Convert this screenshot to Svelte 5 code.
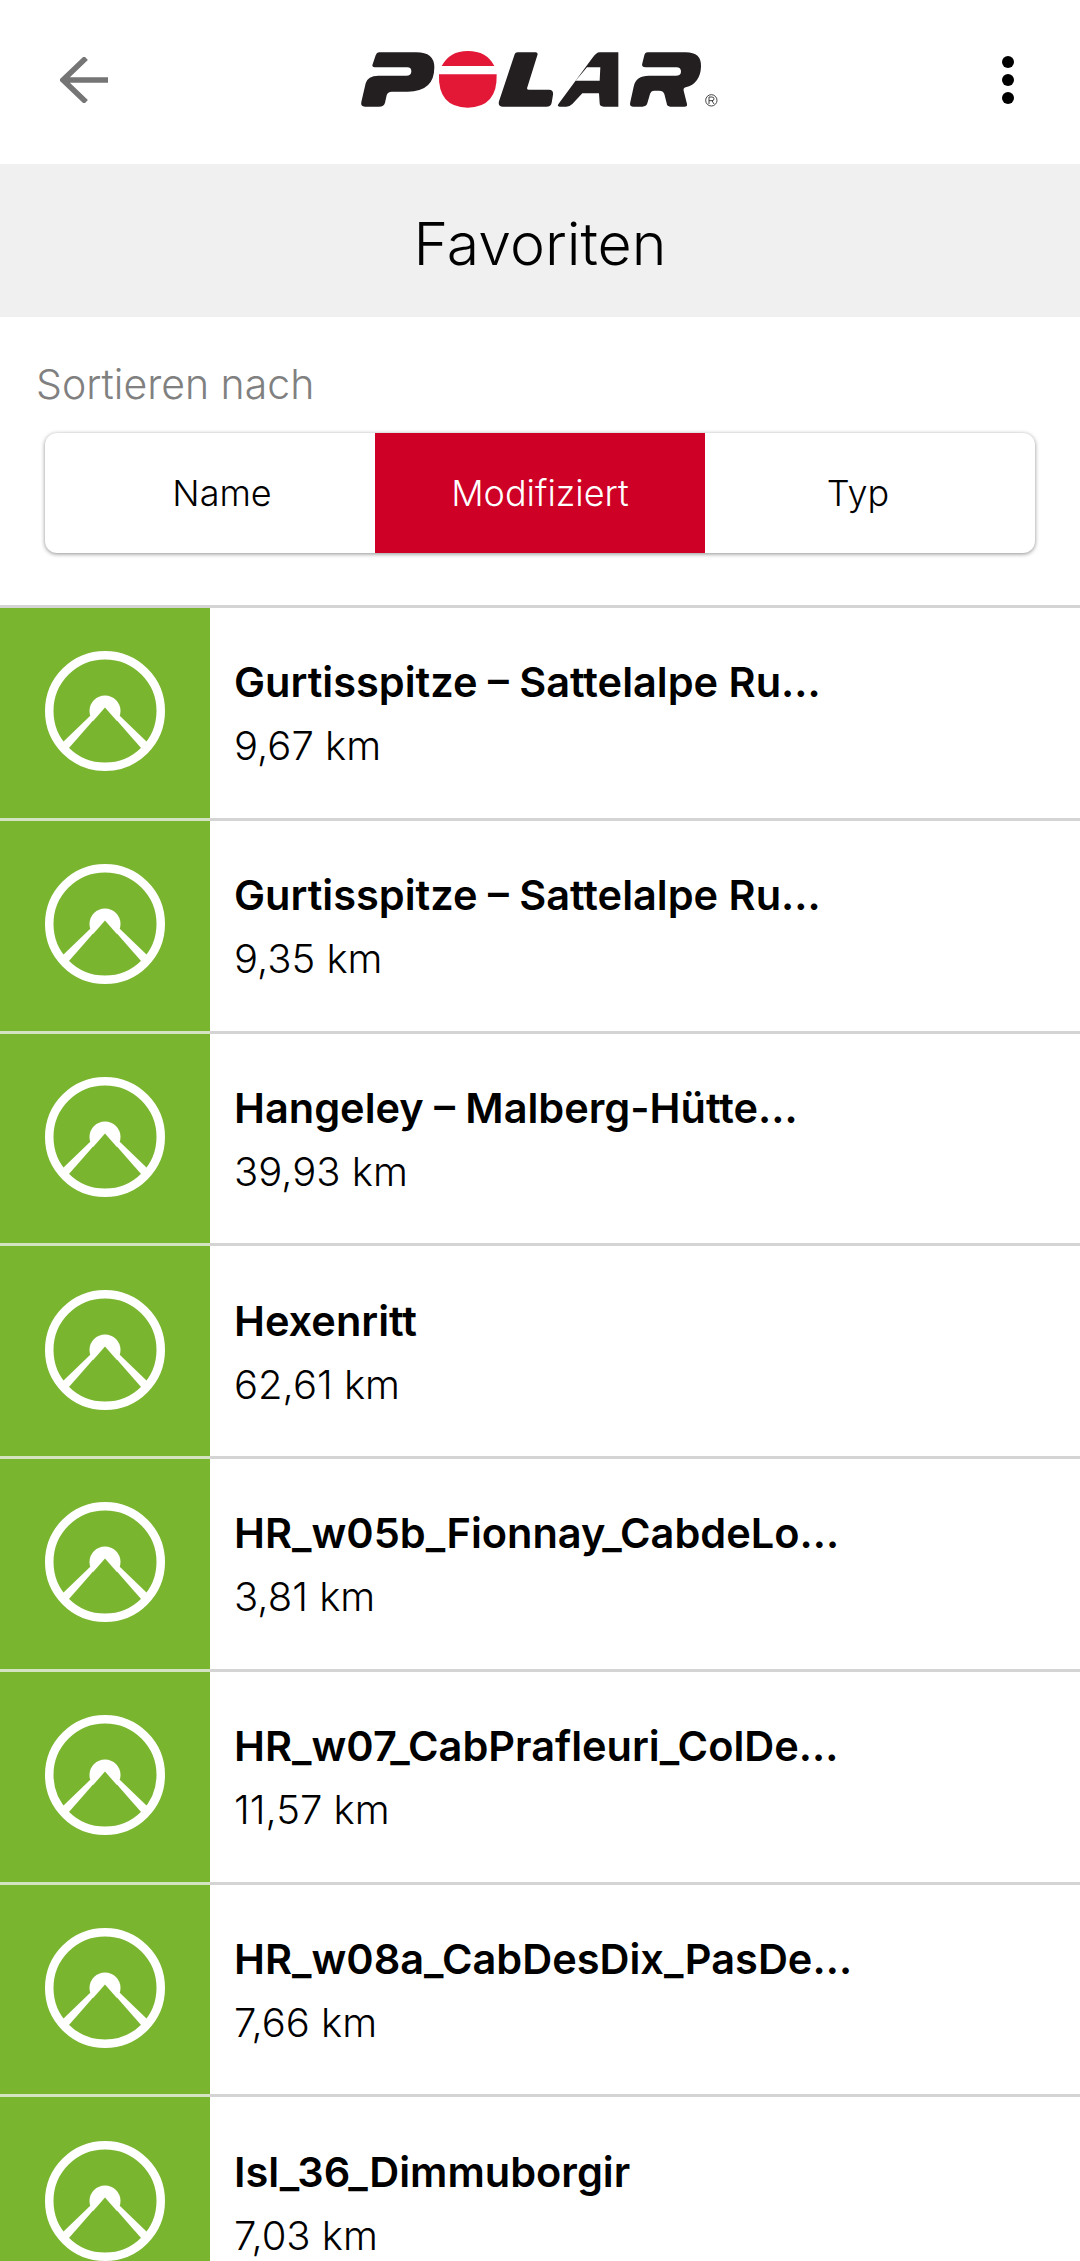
<script lang="ts">
	type Route = {
		name: string
		distance: string
	}

	const sortOptions = ['Name', 'Modifiziert', 'Typ']
	const activeSort = 'Modifiziert'

	const routes: Route[] = [
		{ name: 'Gurtisspitze – Sattelalpe Ru…', distance: '9,67 km' },
		{ name: 'Gurtisspitze – Sattelalpe Ru…', distance: '9,35 km' },
		{ name: 'Hangeley – Malberg-Hütte…', distance: '39,93 km' },
		{ name: 'Hexenritt', distance: '62,61 km' },
		{ name: 'HR_w05b_Fionnay_CabdeLo…', distance: '3,81 km' },
		{ name: 'HR_w07_CabPrafleuri_ColDe…', distance: '11,57 km' },
		{ name: 'HR_w08a_CabDesDix_PasDe…', distance: '7,66 km' },
		{ name: 'Isl_36_Dimmuborgir', distance: '7,03 km' }
	]
</script>

<div class="screen">
	<header class="topbar">
		<svg class="back" viewBox="0 0 48 46" aria-label="Zurück">
			<path d="M26 1 L3 23 L26 45 M3 23 H48" />
		</svg>
		<svg class="logo" viewBox="0 0 1200 300" aria-label="Polar">
			<g fill="#231f20">
				<path d="M150 67 H262 Q316 67 316 112 Q316 185 236 185 H188 Q176 185 173 196 L168 218 Q165 230 150 230 H108 Q94 230 97 216 L110 160 Q116 137 148 137 H232 Q246 137 247 125 Q248 112 234 112 H138 Q126 112 132 100 L140 76 Q143 67 150 67 Z" />
				<path d="M566 67 H620 Q628 67 625 76 L595 172 Q592 179 600 179 H660 Q674 179 672 194 L668 218 Q666 230 652 230 H522 Q506 230 510 214 L556 76 Q558 67 566 67 Z" />
				<path d="M812 67 H868 V230 H824 Q812 230 812 220 L810 190 H760 L730 222 Q722 230 712 230 H692 Q682 230 690 220 L790 84 Q802 67 812 67 Z M774 112 H814 L812 152 H740 Z" fill-rule="evenodd" />
				<path d="M956 67 H1070 Q1118 67 1116 110 Q1114 160 1070 172 Q1062 175 1064 182 L1074 222 Q1076 230 1066 230 H1024 Q1014 230 1013 220 L1006 192 Q1003 182 990 182 H976 Q966 182 963 192 L955 220 Q952 230 940 230 H912 Q900 230 904 216 L914 170 Q920 137 960 137 H1040 Q1056 137 1056 125 Q1056 112 1042 112 H950 Q936 112 940 100 L946 76 Q948 67 956 67 Z" />
			</g>
			<path d="M338 108 Q362 63 416 63 Q474 63 496 108 Z" fill="#e31837" />
			<path d="M330 133 H503 Q506 232 416 233 Q326 232 330 133 Z" fill="#e31837" />
			<circle cx="1147" cy="211" r="17" fill="none" stroke="#231f20" stroke-width="2.5" />
			<path d="M1140 222 V201 H1149 Q1155 201 1155 206.500 Q1155 212 1149 212 H1140 M1149 212 L1155 222" fill="none" stroke="#231f20" stroke-width="2.500" />
		</svg>
		<div class="menu" aria-label="Menü">
			<span></span>
			<span></span>
			<span></span>
		</div>
	</header>

	<h1 class="title">Favoriten</h1>

	<section class="sort">
		<p class="sort__label">Sortieren nach</p>
		<div class="segments">
			{#each sortOptions as option}
				<div class="segment" class:active={option === activeSort}>{option}</div>
			{/each}
		</div>
	</section>

	<ul class="routes">
		{#each routes as route}
			<li class="route">
				<div class="route__thumb">
					<svg class="peak" viewBox="0 0 120 120">
						<circle cx="60" cy="60" r="55.750" fill="none" stroke="#fff" stroke-width="8.500" />
						<path d="M18 91 L45 65 L60 56 L23.500 97.500 Z" fill="#fff" />
						<path d="M102 91 L75 65 L60 56 L96.500 97.500 Z" fill="#fff" />
						<circle cx="60" cy="60" r="15.500" fill="#fff" />
						<path d="M60 56.500 L42 77 H78 Z" fill="#7ab530" />
					</svg>
				</div>
				<div class="route__body">
					<h2 class="route__name">{route.name}</h2>
					<p class="route__distance">{route.distance}</p>
				</div>
			</li>
		{/each}
	</ul>
</div>

<style>
	:global(body) {
		background: #fff;
	}
	.screen {
		height: 2261px;
		overflow: hidden;
		font-family: Inter, 'Noto Sans', sans-serif;
		color: #000;
		background: #fff;
	}
	.topbar {
		height: 164px;
		display: flex;
		align-items: center;
		justify-content: space-between;
		padding: 0 66px 4px 60px;
		box-sizing: border-box;
	}
	.back {
		width: 48px;
		height: 46px;
		fill: none;
		stroke: #757575;
		stroke-width: 5.500;
	}
	.logo {
		width: 400px;
		height: 100px;
		margin-right: 53px;
	}
	.menu {
		display: flex;
		flex-direction: column;
		gap: 6px;
	}
	.menu span {
		width: 12px;
		height: 12px;
		border-radius: 50%;
		background: #000;
	}
	.title {
		margin: 0;
		height: 153px;
		box-sizing: border-box;
		padding-top: 6px;
		display: flex;
		align-items: center;
		justify-content: center;
		background: #f0f0f0;
		font-size: 59px;
		font-weight: 300;
	}
	.sort {
		padding: 43px 45px 52px 36px;
	}
	.sort__label {
		margin: 0 0 25px;
		font-size: 41px;
		line-height: 48px;
		font-weight: 300;
		color: #808080;
	}
	.segments {
		display: grid;
		grid-template-columns: repeat(3, 1fr);
		height: 120px;
		margin-left: 9px;
		border-radius: 12px;
		overflow: hidden;
		box-shadow: 0 1px 4px rgba(0, 0, 0, 0.45);
	}
	.segment {
		display: flex;
		align-items: center;
		justify-content: center;
		font-size: 36px;
		font-weight: 300;
	}
	.segment:first-child {
		padding-left: 24px;
	}
	.segment:last-child {
		padding-right: 24px;
	}
	.segment.active {
		background: #cf0026;
		color: #fff;
	}
	.routes {
		list-style: none;
		margin: 0;
		padding: 0;
	}
	.route {
		display: flex;
		height: 212.750px;
	}
	.route__thumb {
		flex: 0 0 210px;
		display: flex;
		align-items: center;
		justify-content: center;
		background: #7ab530;
		border-top: 3px solid #d4e4c3;
	}
	.route:first-child .route__thumb {
		border-top-color: #d4d4d4;
	}
	.peak {
		width: 120px;
		height: 120px;
		margin-bottom: 3px;
	}
	.route__body {
		flex: 1;
		display: flex;
		flex-direction: column;
		justify-content: center;
		padding: 3px 0 0 24px;
		border-top: 3px solid #d4d4d4;
	}
	.route__name {
		margin: 0 0 16px;
		font-size: 41.500px;
		line-height: 48px;
		font-weight: 600;
	}
	.route__distance {
		margin: 0;
		font-size: 40px;
		line-height: 48px;
		font-weight: 300;
	}
</style>
